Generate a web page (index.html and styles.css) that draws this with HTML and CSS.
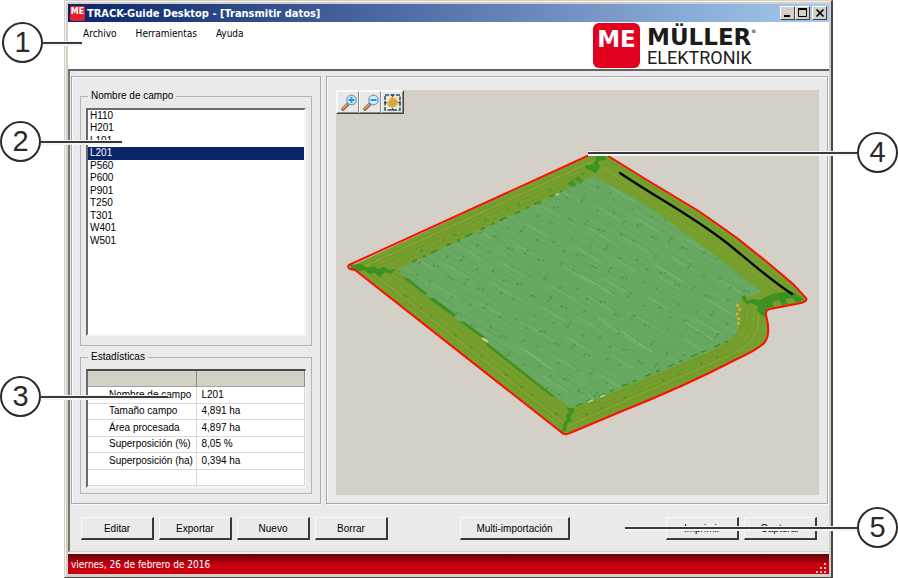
FILE: index.html
```
<!DOCTYPE html>
<html lang="es">
<head>
    <meta charset="UTF-8">
    <meta name="viewport" content="width=device-width, initial-scale=1.0">
    <title>TRACK-Guide Desktop - [Transmitir datos]</title>
    <link rel="stylesheet" href="styles.css">
</head>
<body>
    <div class="window">
        <div class="title-bar">
            <span class="app-icon">ME</span>
            <h1 class="title">TRACK-Guide Desktop - [Transmitir datos]</h1>
            <div class="window-buttons">
                <button class="window-button" aria-label="Minimizar">
                    <svg width="14" height="12"><path d="M3 9h6" stroke="#000" stroke-width="2"/></svg>
                </button>
                <button class="window-button" aria-label="Maximizar">
                    <svg width="14" height="12"><path d="M2.500 2v7.500h8V2M2 2h9" fill="none" stroke="#000"/><path d="M2 2h9" stroke="#000" stroke-width="2"/></svg>
                </button>
                <button class="window-button close" aria-label="Cerrar">
                    <svg width="14" height="12"><path d="M3.500 2.500l7 7M10.500 2.500l-7 7" stroke="#000" stroke-width="1.700"/></svg>
                </button>
            </div>
        </div>

        <div class="header">
            <nav class="menu">
                <a href="#">Archivo</a>
                <a href="#">Herramientas</a>
                <a href="#">Ayuda</a>
            </nav>
            <div class="logo">
                <span class="logo-mark">ME</span>
                <div class="logo-text">
                    <span class="logo-name">MÜLLER<sup>®</sup></span>
                    <span class="logo-sub">ELEKTRONIK</span>
                </div>
            </div>
        </div>

        <main class="content">
            <div class="panels">
                <section class="panel sidebar">
                    <fieldset class="group fields">
                        <legend><label for="fieldList">Nombre de campo</label></legend>
                        <select id="fieldList" class="field-list" size="11">
                            <option>H110</option>
                            <option>H201</option>
                            <option>L101</option>
                            <option selected>L201</option>
                            <option>P560</option>
                            <option>P600</option>
                            <option>P901</option>
                            <option>T250</option>
                            <option>T301</option>
                            <option>W401</option>
                            <option>W501</option>
                        </select>
                    </fieldset>
                    <fieldset class="group">
                        <legend>Estadísticas</legend>
                        <div class="table-frame">
                            <table class="stats">
                                <thead>
                                    <tr><th></th><th></th></tr>
                                </thead>
                                <tbody>
                                    <tr><td>Nombre de campo</td><td>L201</td></tr>
                                    <tr><td>Tamaño campo</td><td>4,891 ha</td></tr>
                                    <tr><td>Área procesada</td><td>4,897 ha</td></tr>
                                    <tr><td>Superposición (%)</td><td>8,05 %</td></tr>
                                    <tr><td>Superposición (ha)</td><td>0,394 ha</td></tr>
                                    <tr><td></td><td></td></tr>
                                </tbody>
                            </table>
                        </div>
                    </fieldset>
                </section>

                <section class="panel map-panel">
                    <div class="map">
                        <div class="map-tools">
                            <button class="tool" aria-label="Acercar">
                                <svg width="20" height="20" viewBox="0 0 20 20">
                                    <path d="M5 17l5-5" stroke="#6d5a58" stroke-width="3.500" stroke-linecap="round"/>
                                    <path d="M5 16.500l4-4" stroke="#e89a45" stroke-width="2" stroke-linecap="round"/>
                                    <circle cx="13.500" cy="8" r="4.700" fill="#d5f1fc" stroke="#8a9fc4" stroke-width="1.500"/>
                                    <path d="M10.500 8h6M13.500 5v6" stroke="#1c9be0" stroke-width="2"/>
                                </svg>
                            </button>
                            <button class="tool" aria-label="Alejar">
                                <svg width="20" height="20" viewBox="0 0 20 20">
                                    <path d="M5 17l5-5" stroke="#6d5a58" stroke-width="3.500" stroke-linecap="round"/>
                                    <path d="M5 16.500l4-4" stroke="#e89a45" stroke-width="2" stroke-linecap="round"/>
                                    <circle cx="13.500" cy="8" r="4.700" fill="#d5f1fc" stroke="#8a9fc4" stroke-width="1.500"/>
                                    <path d="M10.500 8h6" stroke="#1c9be0" stroke-width="2"/>
                                </svg>
                            </button>
                            <button class="tool" aria-label="Ver todo">
                                <svg width="20" height="20" viewBox="0 0 20 20">
                                    <rect x="3" y="3" width="15" height="15" fill="#f7e7c0" stroke="#1d5575" stroke-width="1.500" stroke-dasharray="4 1.500"/>
                                    <path d="M9 2.500h3l-1.500 3zM9 18.500h3l-1.500-3zM2.500 9v3l3-1.500zM18.500 9v3l-3-1.500z" fill="#1d4560"/>
                                    <path d="M10 6l3 1 2 2v3l-2 2-3 1-3-1-1-2 2-4z" fill="#b9bd3e" stroke="#f29a55" stroke-width="1.500"/>
                                    <circle cx="10.500" cy="10.500" r="1.700" fill="#d0b43e" stroke="#e28a4a"/>
                                </svg>
                            </button>
                        </div>
                        <svg class="field" viewBox="336 90 483 405" role="img" aria-label="Campo L201">
                            <defs>
                                <clipPath id="outerClip">
                                    <path d="M349 267L596 152Q600 151 605 154L647 180L697 210Q719 225 737 238L767 262L793 284L806 298Q808 301 801 303L770 309Q765 310 766 315Q771 333 765 342Q759 349 735 360Q685 386 620 412L570 433Q565 436 561 432L355 270Z"/>
                                </clipPath>
                                <clipPath id="innerClip">
                                    <path d="M397 270L594 176L647 205L697 242L730 267L762 292L743 298L737 304L738 329Q732 340 713 350L620 389L573 408L570 408L487 342L460 322Z"/>
                                </clipPath>
                                <pattern id="rows" width="140" height="23" patternUnits="userSpaceOnUse" patternTransform="rotate(31)">
                                    <path d="M0 2h90M30 5h100M0 9h50M70 11h70M10 15h80M50 18h90M0 21h60" stroke="#4f9a50" stroke-width="1" opacity=".4"/>
                                    <path d="M60 7h30M8 13h24M98 20h28" stroke="#9ac795" stroke-width="1" opacity=".3"/>
                                </pattern>
                                <pattern id="specks" width="67" height="53" patternUnits="userSpaceOnUse" patternTransform="rotate(-26)">
                                    <path d="M4 5h3M8 7h2M20 3h2M31 12h3M35 10h2M52 6h3M61 17h2M12 22h3M15 25h2M41 27h3M25 34h2M28 32h3M55 36h3M7 41h2M34 45h3M38 48h2M60 49h3" stroke="#37903b" stroke-width="1.500" opacity=".75"/>
                                </pattern>
                            </defs>
                            <g clip-path="url(#outerClip)">
                                <rect x="340" y="140" width="480" height="300" fill="#779f2f"/>
                                <!-- headland tracks -->
                                <g fill="none" stroke="#4f8f20" opacity=".3">
                                    <path d="M360 266L600 155M366 268L600 160M372 269L598 165M384 270L597 171"/>
                                    <path d="M366 271L565 427M374 271L567 422M384 271L569 416M390 270L572 411"/>
                                    <path d="M605 158Q710 218 800 296M602 162Q700 218 792 295M600 170Q690 220 780 295"/>
                                    <path d="M567 429L735 356Q766 342 761 312M567 424L730 353Q760 339 756 310M569 419L727 349Q754 336 750 308M571 413L722 348Q748 334 744 305"/>
                                </g>
                                <g fill="none" stroke="#a2a83a" opacity=".5">
                                    <path d="M363 267L600 158M370 271L566 425M601 166L785 295M568 426L732 354Q763 340 758 311"/>
                                </g>
                                <g fill="none" stroke="#3c8c1f" stroke-width="2" opacity=".6">
                                    <path d="M420 251L594 169" stroke-dasharray="3 22 2 9 4 31"/>
                                    <path d="M380 276L560 417" stroke-dasharray="2 28 4 17 2 11"/>
                                    <path d="M585 415L730 351" stroke-dasharray="3 14 2 23"/>
                                </g>
                            </g>
                            <path d="M397 270L594 176L647 205L697 242L730 267L762 292L743 298L737 304L738 329Q732 340 713 350L620 389L573 408L570 408L487 342L460 322Z" fill="#69a963"/>
                            <g clip-path="url(#innerClip)">
                                <rect x="390" y="170" width="380" height="245" fill="url(#rows)"/>
                                <rect x="390" y="170" width="380" height="245" fill="url(#specks)"/>
                                <path d="M580 275l35 21M620 330l32 22M655 265l28 17M525 350l28 21M596 316l22 16M685 322l28 18" stroke="#a9c9a4" stroke-width="1" opacity=".5"/>
                            </g>
                            <!-- overlapped areas -->
                            <g fill="#3b9220">
                                <path d="M350 265l11-1 6 4 7-2 4 3 7-2 3 3 8-1-5 5-6-2-6 5-4-4-6 1-5-4-7 2-6-4z"/>
                                <path d="M596 154l9 1 1 5-8 1 2 6-4 6-11-5 0-3 8 0 3-7z"/>
                                <path d="M567 408l7 0-1 5-3 3 2 5-5 2-1 8-4 1 2-9 3-4-1-4 3-3z"/>
                                <path d="M741 297l4-2 2 6 5-2 8 1 12-6 19-3 13 8-7 4-5-5-7 1 3 5-6 1-3-5-7 2 2 5-7 1-3 9-7-6 1-5-8-3-3 2z"/>
                                <path d="M567 183l5-3 5 5-5 2zM574 179l4-3 6 5-4 2z" opacity=".8"/>
                                <path d="M402 277l7 2 19 15-3 1zM428 298l6 0 22 17-2 2zM459 321l6 1 20 15-2 2zM486 342l68 54-2 1-65-51z"/>
                            </g>
                            <g fill="none" stroke="#3b9220">
                                <path d="M412 262L562 191" stroke-width="2" stroke-dasharray="5 7 3 6 7 10"/>
                                <path d="M576 406L728 341" stroke-width="1.500" stroke-dasharray="7 5 4 9"/>
                            </g>
                            <path d="M737 304l3 5-3 5 2 5-1 8" fill="none" stroke="#d9ae45" stroke-width="2.500" stroke-dasharray="3 2"/>
                            <path d="M482 338l6 4" stroke="#e9cf94" stroke-width="2"/>
                            <path d="M588 402l5-2M600 397l5-2M556 195l3-1" stroke="#b9d2ae" stroke-width="1.500"/>
                            <path d="M620 173C660 200 688 213 727 243C748 260 770 280 792 294" fill="none" stroke="#000" stroke-width="2.300" stroke-linecap="round"/>
                            <path d="M349 265L596 152Q600 151 605 154L647 180L697 210Q719 225 737 238L767 262L793 284L806 298Q808 301 801 303L770 309Q765 310 766 315Q771 333 765 342Q759 349 735 360Q685 386 620 412L570 433Q565 436 561 432L355 270L350 269Q347 267 349 265Z" fill="none" stroke="#fb1008" stroke-width="2"/>
                        </svg>
                    </div>
                </section>
            </div>

            <div class="actions">
                <div class="action-group">
                    <button class="action">Editar</button>
                    <button class="action">Exportar</button>
                    <button class="action">Nuevo</button>
                    <button class="action">Borrar</button>
                </div>
                <button class="action wide">Multi-importación</button>
                <div class="action-group">
                    <button class="action">Imprimir</button>
                    <button class="action">Capturar</button>
                </div>
            </div>
        </main>

        <footer class="status-bar">
            <span>viernes, 26 de febrero de 2016</span>
            <svg class="grip" width="12" height="12" viewBox="0 0 12 12">
                <path d="M9 1h2v2H9zM5 5h2v2H5zM9 5h2v2H9zM1 9h2v2H1zM5 9h2v2H5zM9 9h2v2H9z" fill="#e2c9c4"/>
            </svg>
        </footer>
    </div>

    <!-- numbered callouts over the window -->
    <div class="callout callout-1"><span class="number">1</span><i class="leader"></i></div>
    <div class="callout callout-2"><span class="number">2</span><i class="leader"></i></div>
    <div class="callout callout-3"><span class="number">3</span><i class="leader"></i></div>
    <div class="callout callout-4"><i class="leader"></i><span class="number">4</span></div>
    <div class="callout callout-5"><i class="leader"></i><span class="number">5</span></div>
</body>
</html>
```
FILE: styles.css
```
* {
    box-sizing: border-box;
}

body {
    position: relative;
    min-height: 100vh;
    margin: 0;
    padding: 0 65px 0 64px;
    display: flex;
    background-color: #fff;
    font-family: "Liberation Sans", Arial, sans-serif;
    font-size: 10px;
    color: #000;
}

button,
select {
    font: inherit;
    color: inherit;
}

.window {
    flex: 1;
    min-width: 0;
    display: flex;
    flex-direction: column;
    padding: 3px 2px 3px 3px;
    background-color: #d4d0c8;
    border: 1px solid #d4d0c8;
    border-right: 2px solid #484848;
    border-bottom-color: #484848;
    box-shadow: inset 1px 1px #f4f2ee;
}

/* Title bar */
.title-bar {
    display: flex;
    align-items: center;
    height: 18px;
    padding: 0 2px;
    background: linear-gradient(to right, #0a246a, #a6caf0);
}

.app-icon {
    width: 15px;
    height: 15px;
    border-radius: 2px;
    background-color: #e2202c;
    color: #fff;
    font-family: "DejaVu Sans", sans-serif;
    font-size: 8px;
    font-weight: bold;
    line-height: 12px;
    text-align: center;
}

.title {
    flex: 1;
    margin: 0 0 0 2px;
    color: #fff;
    font-family: "DejaVu Sans Condensed", "DejaVu Sans", sans-serif;
    font-size: 11px;
    font-weight: bold;
    white-space: nowrap;
}

.window-buttons {
    display: flex;
}

.window-button {
    width: 15px;
    height: 14px;
    padding: 0;
    border: 1px solid;
    border-color: #fff #404040 #404040 #fff;
    background-color: #d4d0c8;
    line-height: 0;
}

.window-button svg {
    width: 100%;
    height: 100%;
}

.close {
    margin-left: 2px;
}

/* Menu and logo */
.header {
    display: flex;
    justify-content: space-between;
    height: 47px;
    padding-right: 62px;
    background-color: #fff;
}

.menu {
    display: flex;
    gap: 19px;
    padding: 5px 15px;
    font-family: "DejaVu Sans Condensed", "DejaVu Sans", sans-serif;
    line-height: 14px;
}

.menu a {
    color: #000;
    text-decoration: none;
}

.logo {
    display: flex;
    gap: 7px;
    width: 174px;
    padding-top: 1px;
}

.logo-mark {
    width: 47px;
    height: 45px;
    border-radius: 6px;
    background-color: #e3001f;
    color: #fff;
    font-family: "DejaVu Sans", sans-serif;
    font-size: 23px;
    font-weight: bold;
    line-height: 32px;
    text-align: center;
}

.logo-text {
    display: flex;
    flex-direction: column;
    color: #1c1c1a;
}

.logo-name {
    font-family: "DejaVu Sans", sans-serif;
    font-size: 23px;
    font-weight: bold;
    line-height: 28px;
    white-space: nowrap;
}

.logo-name sup {
    font-size: 5px;
    line-height: 0;
    vertical-align: 12px;
}

.logo-sub {
    font-family: Roboto, sans-serif;
    font-size: 18px;
    line-height: 14px;
}

/* Work area */
.content {
    flex: 1;
    display: flex;
    flex-direction: column;
    padding-top: 5px;
    background-color: #eaeaea;
    border-top: 2px solid #626262;
    border-left: 2px solid #767676;
    border-bottom: 1px solid #d4d0c8;
}

.panels {
    flex: 1;
    display: grid;
    grid-template-columns: 250px 1fr;
    gap: 5px;
    padding: 0 1px;
}

.panel {
    border: 1px solid #a9a9ab;
    box-shadow: inset 1px 1px #f8f8f8, 1px 1px #f8f8f8;
}

.sidebar {
    display: flex;
    flex-direction: column;
    gap: 4px;
    padding: 12px 8px 9px;
}

.group {
    min-width: 0;
    margin: 0;
    padding: 5px;
    border: 1px solid #b4b4b4;
}

.group legend {
    margin-left: 2px;
    padding: 0 3px;
    line-height: 14px;
}

.fields {
    flex: 1;
    display: flex;
    flex-direction: column;
}

.field-list {
    display: block;
    width: 100%;
    height: 228px;
    padding: 0;
    border: 2px solid;
    border-color: #6a6a6a #f6f6f6 #f6f6f6 #6a6a6a;
    border-radius: 0;
    background-color: #fff;
    outline: none;
    overflow: hidden;
}

.field-list option {
    height: 12px;
    min-height: 12px;
    padding: 0 2px;
    line-height: 12px;
}

.field-list option:nth-child(even) {
    height: 13px;
}

.field-list option:checked {
    background: #0a246a linear-gradient(#0a246a, #0a246a);
    color: #fff;
}

.table-frame {
    border: 2px solid;
    border-color: #4a4a4a #f6f6f6 #f6f6f6 #6a6a6a;
    border-right-width: 1px;
    background-color: #fff;
}

.stats {
    width: 100%;
    height: 115px;
    border-collapse: separate;
    border-spacing: 0;
    table-layout: fixed;
}

.stats th {
    height: 16px;
    padding: 0;
    background-color: #d4d0c8;
    border-right: 1px solid #8a8a86;
    border-bottom: 1px solid #a4a29c;
}

.stats td {
    height: 16px;
    padding: 0;
    border-right: 1px solid #dcd9d4;
    border-bottom: 1px solid #dcd9d4;
    line-height: 12px;
    white-space: nowrap;
}

.stats td:first-child {
    padding-left: 21px;
}

.stats td:last-child {
    padding-left: 5px;
}

/* Map */
.map-panel {
    padding: 13px 8px 8px 9px;
}

.map {
    position: relative;
    height: 100%;
    background-color: #d4cfc7;
}

.map-tools {
    position: absolute;
    top: 0;
    left: 0;
    display: flex;
    border: 1px solid;
    border-color: #fafafa #444 #444 #fafafa;
}

.tool {
    width: 22px;
    height: 22px;
    padding: 0;
    border: 1px solid;
    border-color: #fafafa #8a8a8a #8a8a8a #fafafa;
    background-color: #e8e8e8;
    line-height: 0;
}

.field {
    display: block;
    width: 100%;
    height: 100%;
}

/* Buttons under the panels */
.actions {
    display: flex;
    align-items: center;
    padding: 13px 12px 11px 11px;
}

.action-group {
    display: flex;
    gap: 5px;
}

.action {
    width: 73px;
    height: 23px;
    padding: 0;
    border: 1px solid #f8f8f8;
    border-right: 2px solid #3a3a3a;
    border-bottom: 2px solid #3a3a3a;
    background-color: #eaeaea;
}

.wide {
    width: 110px;
    margin-left: 72px;
    margin-right: auto;
}

/* Status bar */
.status-bar {
    display: flex;
    align-items: center;
    justify-content: space-between;
    height: 22px;
    padding: 0 2px 0 3px;
    background: linear-gradient(#5e070b, #c8000d 55%);
    border-top: 2px solid #f2f0ee;
    color: #fff;
    font-family: "DejaVu Sans Condensed", "DejaVu Sans", sans-serif;
}

.grip {
    align-self: flex-end;
}

/* Callouts */
.callout {
    position: absolute;
    display: flex;
    align-items: center;
}

.number {
    width: 41px;
    height: 41px;
    border: 2px solid #2b2a29;
    border-radius: 50%;
    background-color: #fff;
    color: #2b2a29;
    font-size: 29px;
    line-height: 37px;
    text-align: center;
}

.leader {
    flex: 1;
    height: 2px;
    background-color: #3a3a3a;
    box-shadow: 0 -1px #f4f4f4, 0 2px #f4f4f4;
}

.callout-1 {
    top: 22px;
    left: 2px;
    width: 80px;
}

.callout-2 {
    top: 121px;
    left: 0;
    width: 122px;
}

.callout-3 {
    top: 376px;
    left: 0;
    width: 168px;
}

.callout-4 {
    top: 132px;
    right: 0;
    width: 310px;
}

.callout-5 {
    top: 507px;
    right: 0;
    width: 273px;
}
```
